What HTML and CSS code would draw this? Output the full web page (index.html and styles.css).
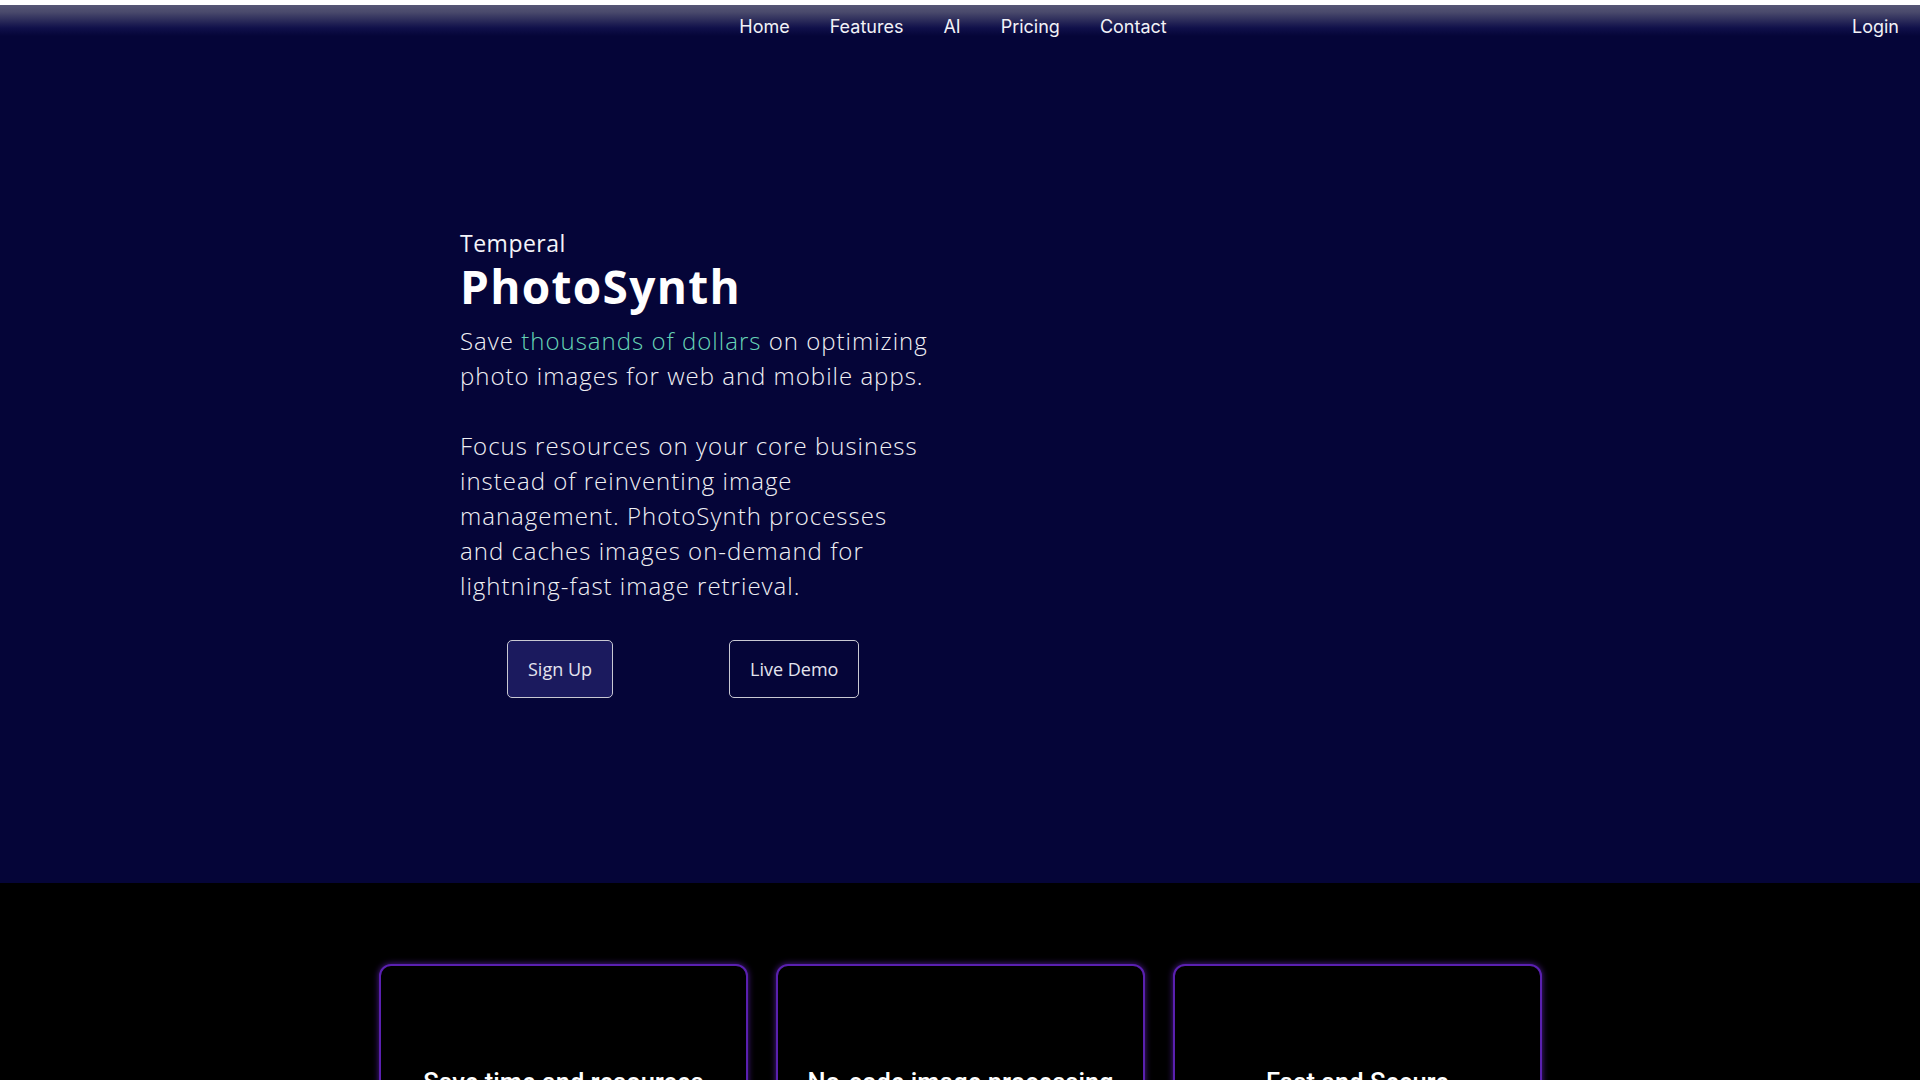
FILE: index.html
```html
<!DOCTYPE html>
<html lang="en">
<head>
<meta charset="utf-8">
<title>PhotoSynth</title>
<link rel="stylesheet" href="styles.css">
</head>
<body>
<header class="topbar">
  <div class="side"></div>
  <nav class="links">
    <a href="#">Home</a>
    <a href="#">Features</a>
    <a href="#">AI</a>
    <a href="#">Pricing</a>
    <a href="#">Contact</a>
  </nav>
  <div class="side right"><a href="#" class="login">Login</a></div>
</header>
<section class="hero">
  <div class="hero-inner">
    <p class="brand">Temperal</p>
    <h1 class="title">PhotoSynth</h1>
    <p class="lead">Save <span class="accent">thousands of dollars</span> on optimizing photo images for web and mobile apps.</p>
    <p class="body">Focus resources on your core business instead of reinventing image management. PhotoSynth processes and caches images on-demand for lightning-fast image retrieval.</p>
    <div class="actions">
      <a href="#" class="btn primary">Sign Up</a>
      <a href="#" class="btn">Live Demo</a>
    </div>
  </div>
</section>
<section class="features">
  <div class="cards">
    <div class="card"><h2>Save time and resources</h2></div>
    <div class="card"><h2>No-code image processing</h2></div>
    <div class="card"><h2>Fast and Secure</h2></div>
  </div>
</section>
</body>
</html>
```
FILE: styles.css
```css
* { box-sizing: border-box; }
html, body { margin: 0; padding: 0; }
body {
  background: #000;
  font-family: "Open Sans", sans-serif;
  color: #fff;
  height: 1080px;
  overflow: hidden;
}
a { color: inherit; text-decoration: none; }

.topbar {
  position: relative;
  z-index: 2;
  height: 52px;
  margin-bottom: -52px;
  display: grid;
  grid-template-columns: 1fr auto 1fr;
  align-items: center;
  padding: 0 14px 0 0;
  background: linear-gradient(to bottom, #ffffff 0, #ffffff 5px, #565675 5px, #4a4a6c 12px, #10104a 28px, rgba(5,5,56,0) 36px);
  font-family: Inter, "Noto Sans", sans-serif;
  font-size: 18px;
  color: #f2f2f6;
}
.links { display: flex; gap: 40px; }
.side.right { display: flex; justify-content: flex-end; }
.login { padding-right: 7px; }

.hero {
  background: #050538;
  height: 883px;
  padding: 228px 0 0 460px;
}
.hero-inner { width: 472px; }
.brand {
  margin: 0;
  font-family: "Open Sans", sans-serif;
  font-size: 23px;
  line-height: 30px;
  letter-spacing: 0.5px;
  color: #f4f4f8;
}
.title {
  margin: 0;
  font-family: "Open Sans", sans-serif;
  font-weight: 700;
  font-size: 46px;
  line-height: 56px;
  letter-spacing: 1.3px;
}
.lead, .body {
  margin: 0;
  font-family: "Open Sans", sans-serif;
  font-weight: 300;
  font-size: 24px;
  line-height: 35px;
  letter-spacing: 1px;
  color: #f0f0f4;
}
.lead { margin-top: 9px; }
.body { margin-top: 35px; }
.accent { color: #66d4b6; }

.actions {
  display: flex;
  gap: 116px;
  padding-left: 47px;
  margin-top: 37px;
}
.btn {
  display: inline-flex;
  align-items: center;
  justify-content: center;
  height: 58px;
  padding: 0 20px;
  border: 1px solid #c9c9d3;
  border-radius: 5px;
  font-family: "Open Sans", sans-serif;
  font-size: 18px;
  color: #e4e4ee;
}
.btn.primary { background: #1b1a5e; }

.features {
  padding: 81px 0 0;
}
.cards {
  display: flex;
  justify-content: center;
  gap: 28px;
  padding-left: 1px;
}
.card {
  width: 369px;
  height: 320px;
  border: 2px solid #5a20b0;
  border-radius: 12px;
  box-shadow: 0 0 6px rgba(110, 40, 210, 0.7);
  background: #000;
  padding-top: 100px;
  text-align: center;
}
.card h2 {
  margin: 0;
  font-family: Roboto, sans-serif;
  font-weight: 500;
  font-size: 25.5px;
  line-height: 32px;
  color: #fff;
}
```
